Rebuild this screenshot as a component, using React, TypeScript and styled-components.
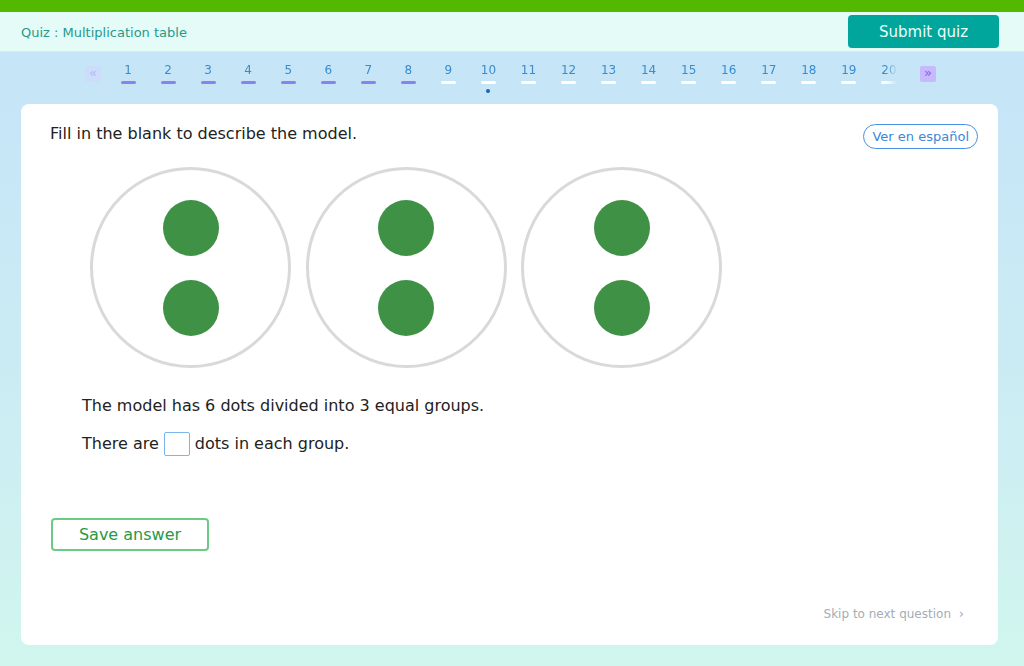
import React, {FC, useState} from 'react';
import styled, {createGlobalStyle} from 'styled-components';

const GlobalStyle = createGlobalStyle`
  html, body {
    margin: 0;
    padding: 0;
  }
  body {
    font-family: "DejaVu Sans", Verdana, sans-serif;
  }
`

const groups = [2, 2, 2]
const questions = Array.from({length: 20}, (_, i) => i + 1)
const answered = 8
const current = 10

const App: FC = () => {
    const [value, setValue] = useState<string>('')

    return (
        <Page>
            <GlobalStyle/>
            <TopStripe/>
            <Header>
                <QuizTitle>Quiz : Multiplication table</QuizTitle>
                <SubmitButton>Submit quiz</SubmitButton>
            </Header>
            <Body>
                <Nav>
                    <ArrowBox $faded>«</ArrowBox>
                    <NumberWindow>
                        <NumberList>
                            {questions.map(n => (
                                <NumberItem key={n}>
                                    <NumberLabel>{n}</NumberLabel>
                                    <NumberBar $done={n <= answered}/>
                                    <CurrentDot $show={n === current}/>
                                </NumberItem>
                            ))}
                        </NumberList>
                    </NumberWindow>
                    <ArrowBox>»</ArrowBox>
                </Nav>
                <Card>
                    <CardTop>
                        <Prompt>Fill in the blank to describe the model.</Prompt>
                        <LangButton>Ver en español</LangButton>
                    </CardTop>
                    <Model>
                        {groups.map((count, i) => (
                            <Group key={i}>
                                {Array.from({length: count}, (_, j) => <Dot key={j}/>)}
                            </Group>
                        ))}
                    </Model>
                    <Sentence>The model has 6 dots divided into 3 equal groups.</Sentence>
                    <Sentence>
                        There are
                        <BlankInput value={value} onChange={e => setValue(e.target.value)}/>
                        dots in each group.
                    </Sentence>
                    <SaveButton>Save answer</SaveButton>
                    <CardFooter>
                        <SkipLink>Skip to next question <Chevron>›</Chevron></SkipLink>
                    </CardFooter>
                </Card>
            </Body>
        </Page>
    );
};

const Page = styled.div`
  width: 1024px;
  height: 666px;
  overflow: hidden;
  display: flex;
  flex-direction: column;
`

const TopStripe = styled.div`
  height: 12px;
  background-color: #53b800;
`

const Header = styled.div`
  height: 40px;
  background-color: #e4fbf8;
  border-bottom: 1px solid #d2eef0;
  display: flex;
  align-items: center;
  justify-content: space-between;
  padding: 0 25px 0 21px;
  box-sizing: border-box;
`

const QuizTitle = styled.div`
  font-size: 13px;
  color: #26998c;
  margin-top: 1px;
`

const SubmitButton = styled.button`
  width: 151px;
  height: 33px;
  border: none;
  border-radius: 4px;
  background-color: #00a69c;
  color: #eafffb;
  font-family: inherit;
  font-size: 15px;
  cursor: pointer;
`

const Body = styled.div`
  flex: 1;
  background: linear-gradient(180deg, #c5e5f8 0%, #cbebf4 50%, #d1f6ee 100%);
  padding: 0 26px 21px 21px;
  display: flex;
  flex-direction: column;
`

const Nav = styled.div`
  height: 52px;
  display: flex;
  align-items: flex-start;
  padding-left: 64px;
`

const ArrowBox = styled.div<{ $faded?: boolean }>`
  width: 16px;
  height: 16px;
  margin-top: 14px;
  margin-left: ${p => p.$faded ? '0' : '22px'};
  margin-right: ${p => p.$faded ? '7px' : '0'};
  border-radius: 2px;
  background-color: ${p => p.$faded ? '#ccdcfa' : '#c7b9fb'};
  color: ${p => p.$faded ? '#b0bef0' : '#8360f0'};
  font-size: 13px;
  line-height: 14px;
  text-align: center;
`

const NumberWindow = styled.div`
  width: 790px;
  overflow: hidden;
  -webkit-mask-image: linear-gradient(90deg, #000 0, #000 777px, transparent 790px);
  mask-image: linear-gradient(90deg, #000 0, #000 777px, transparent 790px);
`

const NumberList = styled.div`
  display: flex;
  width: max-content;
`

const NumberItem = styled.div`
  width: 40.05px;
  display: flex;
  flex-direction: column;
  align-items: center;
  padding-top: 11px;
`

const NumberLabel = styled.div`
  font-size: 12px;
  line-height: 15px;
  color: #3a8bd0;
`

const NumberBar = styled.div<{ $done: boolean }>`
  width: 15px;
  height: 3px;
  margin-top: 3px;
  border-radius: 2px;
  background-color: ${p => p.$done ? '#8c82ee' : '#ffffff'};
`

const CurrentDot = styled.div<{ $show: boolean }>`
  width: 4px;
  height: 4px;
  margin-top: 5px;
  border-radius: 50%;
  background-color: ${p => p.$show ? '#1565b8' : 'transparent'};
`

const Card = styled.div`
  flex: 1;
  background-color: #ffffff;
  border-radius: 8px;
  padding: 20px 20px 20px 29px;
  display: flex;
  flex-direction: column;
  align-items: flex-start;
  color: #222222;
`

const CardTop = styled.div`
  align-self: stretch;
  display: flex;
  justify-content: space-between;
  align-items: flex-start;
`

const Prompt = styled.div`
  font-size: 16px;
  line-height: 20px;
`

const LangButton = styled.button`
  margin-top: 0;
  height: 25px;
  padding: 0 8px;
  border: 1px solid #4a90e2;
  border-radius: 13px;
  background: #ffffff;
  color: #3d86d8;
  font-family: inherit;
  font-size: 13px;
  cursor: pointer;
`

const Model = styled.div`
  display: flex;
  gap: 14.5px;
  margin: 18px 0 0 40px;
`

const Group = styled.div`
  width: 201px;
  height: 201px;
  box-sizing: border-box;
  border: 3px solid #d9d9d9;
  border-radius: 50%;
  display: flex;
  flex-direction: column;
  align-items: center;
  justify-content: center;
  gap: 24px;
`

const Dot = styled.div`
  width: 56px;
  height: 56px;
  border-radius: 50%;
  background-color: #3f9145;
`

const Sentence = styled.div`
  display: flex;
  align-items: center;
  gap: 5px;
  margin: 25px 0 0 32px;
  font-size: 16px;
  line-height: 26px;

  & + & {
    margin-top: 12px;
  }
`

const BlankInput = styled.input`
  width: 26px;
  height: 24px;
  box-sizing: border-box;
  border: 1px solid #78b6ee;
  border-radius: 2px;
  padding: 0 2px;
  font-family: inherit;
  font-size: 15px;
  outline: none;
`

const SaveButton = styled.button`
  margin: 61px 0 0 1px;
  width: 158px;
  height: 33px;
  border: 2px solid #6bcb86;
  border-radius: 4px;
  background: #ffffff;
  color: #249a45;
  font-family: inherit;
  font-size: 16px;
  cursor: pointer;
`

const CardFooter = styled.div`
  align-self: stretch;
  flex: 1;
  display: flex;
  justify-content: flex-end;
  align-items: flex-end;
  padding-right: 14px;
`

const SkipLink = styled.div`
  font-size: 12px;
  color: #a3adb5;
  margin-bottom: 4px;
`

const Chevron = styled.span`
  margin-left: 4px;
  font-size: 13px;
`

export default App;
